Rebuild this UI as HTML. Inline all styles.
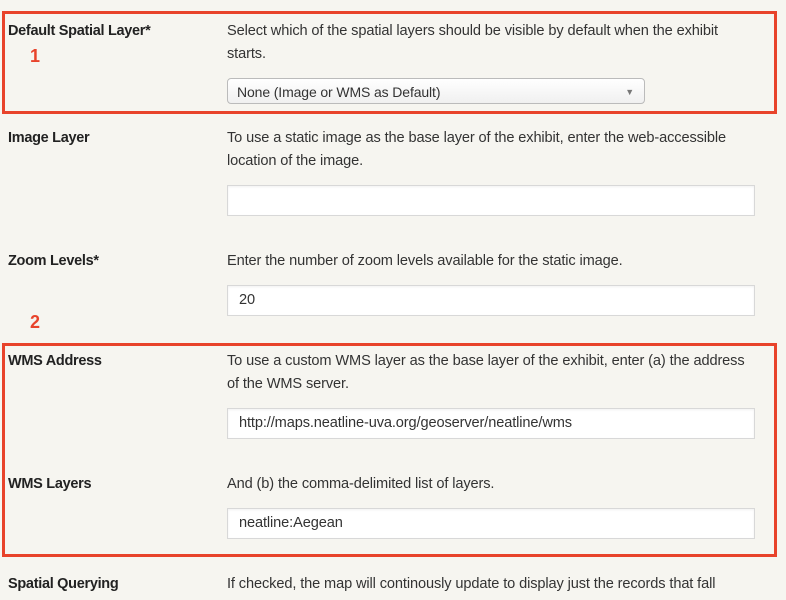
<!DOCTYPE html>
<html><head><meta charset="utf-8"><style>
body{margin:0;width:786px;height:600px;background:#f6f5f0;overflow:hidden;position:relative;font-family:"Liberation Sans",sans-serif;color:#333;font-size:14.6px;letter-spacing:-0.12px}
.a{position:absolute;white-space:nowrap;line-height:23px}
.l{left:8px;font-weight:bold;color:#222;font-size:14.5px;letter-spacing:-0.3px}
.d{left:227px}
.box{position:absolute;border:3px solid #e8432b;box-sizing:border-box}
.in{position:absolute;left:227px;width:528px;height:31px;background:#fff;border:1px solid #d8d8d8;box-sizing:border-box;box-shadow:inset 0 1px 2px rgba(0,0,0,.06);padding-left:11px;line-height:29px}
.n{position:absolute;color:#e8432b;font-family:"Liberation Sans",sans-serif;font-size:18px;font-weight:bold}
</style></head><body>
<div class="box" style="left:2px;top:11px;width:775px;height:103px"></div>
<div class="box" style="left:2px;top:343px;width:775px;height:214px"></div>
<div class="a l" style="top:20px">Default Spatial Layer*</div>
<div class="a d" style="top:20px">Select which of the spatial layers should be visible by default when the exhibit</div>
<div class="a d" style="top:43px">starts.</div>
<div class="n" style="left:30px;top:46px">1</div>
<div style="position:absolute;left:227px;top:78px;width:418px;height:26px;box-sizing:border-box;border:1px solid #bbb;border-radius:4px;background:linear-gradient(#fff,#f0f0f0);padding-left:9px;line-height:26px;font-size:14px">None (Image or WMS as Default)<span style="position:absolute;right:10px;top:0;font-size:9px;color:#777">▼</span></div>
<div class="a l" style="top:127px">Image Layer</div>
<div class="a d" style="top:127px">To use a static image as the base layer of the exhibit, enter the web-accessible</div>
<div class="a d" style="top:150px">location of the image.</div>
<div class="in" style="top:185px"></div>
<div class="a l" style="top:250px">Zoom Levels*</div>
<div class="a d" style="top:250px">Enter the number of zoom levels available for the static image.</div>
<div class="in" style="top:285px">20</div>
<div class="n" style="left:30px;top:312px">2</div>
<div class="a l" style="top:350px">WMS Address</div>
<div class="a d" style="top:350px">To use a custom WMS layer as the base layer of the exhibit, enter (a) the address</div>
<div class="a d" style="top:373px">of the WMS server.</div>
<div class="in" style="top:408px">http://maps.neatline-uva.org/geoserver/neatline/wms</div>
<div class="a l" style="top:473px">WMS Layers</div>
<div class="a d" style="top:473px">And (b) the comma-delimited list of layers.</div>
<div class="in" style="top:508px">neatline:Aegean</div>
<div class="a l" style="top:573px">Spatial Querying</div>
<div class="a d" style="top:573px">If checked, the map will continously update to display just the records that fall</div>
</body></html>
